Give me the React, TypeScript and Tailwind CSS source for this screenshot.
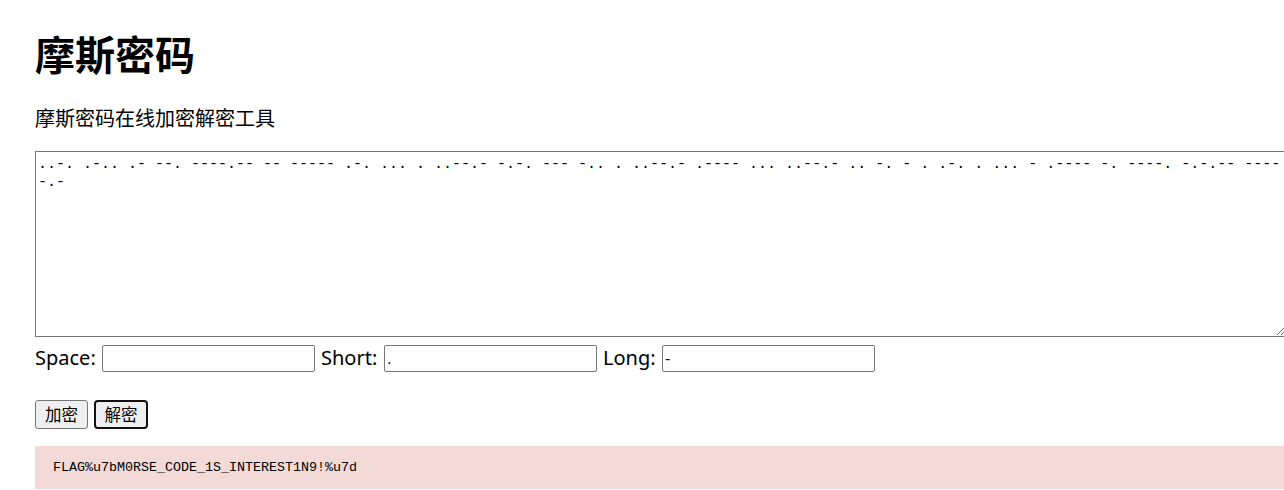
import React from 'react';

const MORSE =
  '..-. .-.. .- --. ----.-- -- ----- .-. ... . ..--.- -.-. --- -.. . ..--.- .---- ... ..--.- .. -. - . .-. . ... - .---- -. ----. -.-.-- ----\n-.-';

const cjk = "font-['Noto_Sans_CJK_SC',sans-serif]";

const Field = ({ label, width, value }: { label: string; width: string; value: string }) => (
  <>
    <span className={`${width} whitespace-nowrap text-[20px] leading-[25px] font-['Noto_Sans',sans-serif]`}>{label}</span>
    <input
      readOnly
      value={value}
      className="w-[213px] h-[27px] border border-[#767676] rounded-[2px] px-[2px] text-[16px] font-['Liberation_Sans',sans-serif] bg-white outline-none"
    />
  </>
);

export default function App() {
  return (
    <div className="w-full h-[490px] overflow-hidden bg-white text-black">
      <div className="w-[1290px] pl-[35px]">
        <h1 className={`${cjk} font-bold text-[40px] leading-[48px] mt-[29px]`}>摩斯密码</h1>
        <p className={`${cjk} text-[20px] leading-[28px] mt-[27px]`}>摩斯密码在线加密解密工具</p>

        <textarea
          readOnly
          defaultValue={MORSE}
          className="block mt-[19px] w-[1251px] h-[186px] border border-[#767676] pt-[4px] px-[2px] text-[15px] leading-[18px] font-['Liberation_Mono',monospace] outline-none resize"
        />

        <div className="flex items-start gap-[6px] mt-[8px]">
          <Field label="Space:" width="w-[61px]" value="" />
          <Field label="Short:" width="w-[57px]" value="." />
          <Field label="Long:" width="w-[53px]" value="-" />
        </div>

        <div className="flex gap-[6px] mt-[28px]">
          <button className={`${cjk} w-[53px] h-[29px] bg-[#efefef] border border-[#767676] rounded-[3px] text-[16.5px] leading-none`}>
            加密
          </button>
          <button className={`${cjk} w-[54px] h-[29px] bg-[#efefef] border-2 border-[#101010] rounded-[4px] text-[16.5px] leading-none`}>
            解密
          </button>
        </div>

        <pre className="mt-[17px] w-[1251px] bg-[#f4dad6] pl-[18px] py-[12px] text-[13.33px] leading-[19px] font-['Liberation_Mono',monospace]">
          FLAG%u7bM0RSE_CODE_1S_INTEREST1N9!%u7d
        </pre>
      </div>
    </div>
  );
}
